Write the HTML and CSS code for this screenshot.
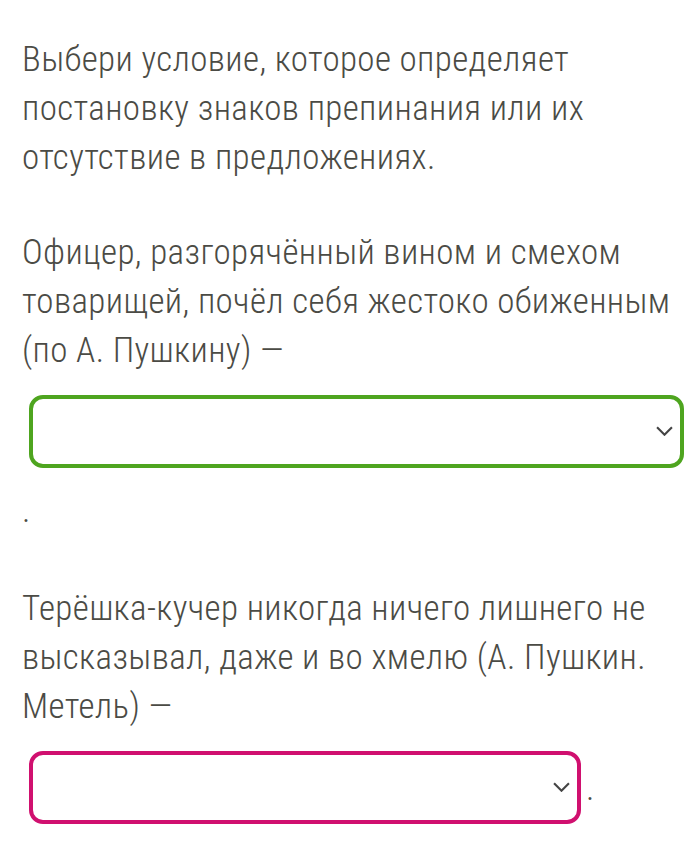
FILE: index.html
```html
<!DOCTYPE html>
<html lang="ru">
<head>
    <meta charset="UTF-8">
    <title>Знаки препинания</title>
    <link rel="stylesheet" href="styles.css">
</head>
<body>
    <main class="exercise">
        <p class="task">Выбери условие, которое определяет постановку знаков препинания или их отсутствие в предложениях.</p>

        <p class="sentence">Офицер, разгорячённый вином и смехом товарищей, почёл себя жестоко обиженным (по А. Пушкину) —
            <span class="pick pick-wide pick-ok"><svg class="arrow" viewBox="0 0 16 9"><path d="M1 1l7 7 7-7"/></svg></span>.</p>

        <p class="sentence">Терёшка-кучер никогда ничего лишнего не высказывал, даже и во хмелю (А. Пушкин. Метель) —
            <span class="pick pick-narrow pick-bad"><svg class="arrow" viewBox="0 0 16 9"><path d="M1 1l7 7 7-7"/></svg></span>.</p>
    </main>
</body>
</html>
```

FILE: styles.css
```css
body {
    margin: 0;
    background: #ffffff;
}

.exercise {
    padding: 35px 14px 0 22px;
    font-family: Roboto, "Liberation Sans", sans-serif;
    font-weight: 300;
    font-stretch: condensed;
    font-size: 35px;
    line-height: 49px;
    letter-spacing: 0.38px;
    color: #4b4b45;
}

.task {
    margin: 0 0 46px;
}

.sentence {
    margin: 0 0 49px;
}

/* dropdown placeholder; its bottom edge hangs below the text baseline */
.pick {
    display: inline-block;
    overflow: hidden;
    box-sizing: border-box;
    height: 73px;
    margin: 20px 5px 18px 7px;
    padding-right: 7px;
    border: 4px solid;
    border-radius: 14px;
    font-size: 0;
    line-height: 65px;
    text-align: right;
    vertical-align: -42px;
}

.pick-wide {
    width: 655px;
}

.pick-narrow {
    width: 552px;
}

.pick-ok {
    border-color: #4ea51f;
}

.pick-bad {
    border-color: #d0106f;
}

.arrow {
    width: 17px;
    height: 10px;
    vertical-align: middle;
    fill: none;
    stroke: #444444;
    stroke-width: 2;
}
```
